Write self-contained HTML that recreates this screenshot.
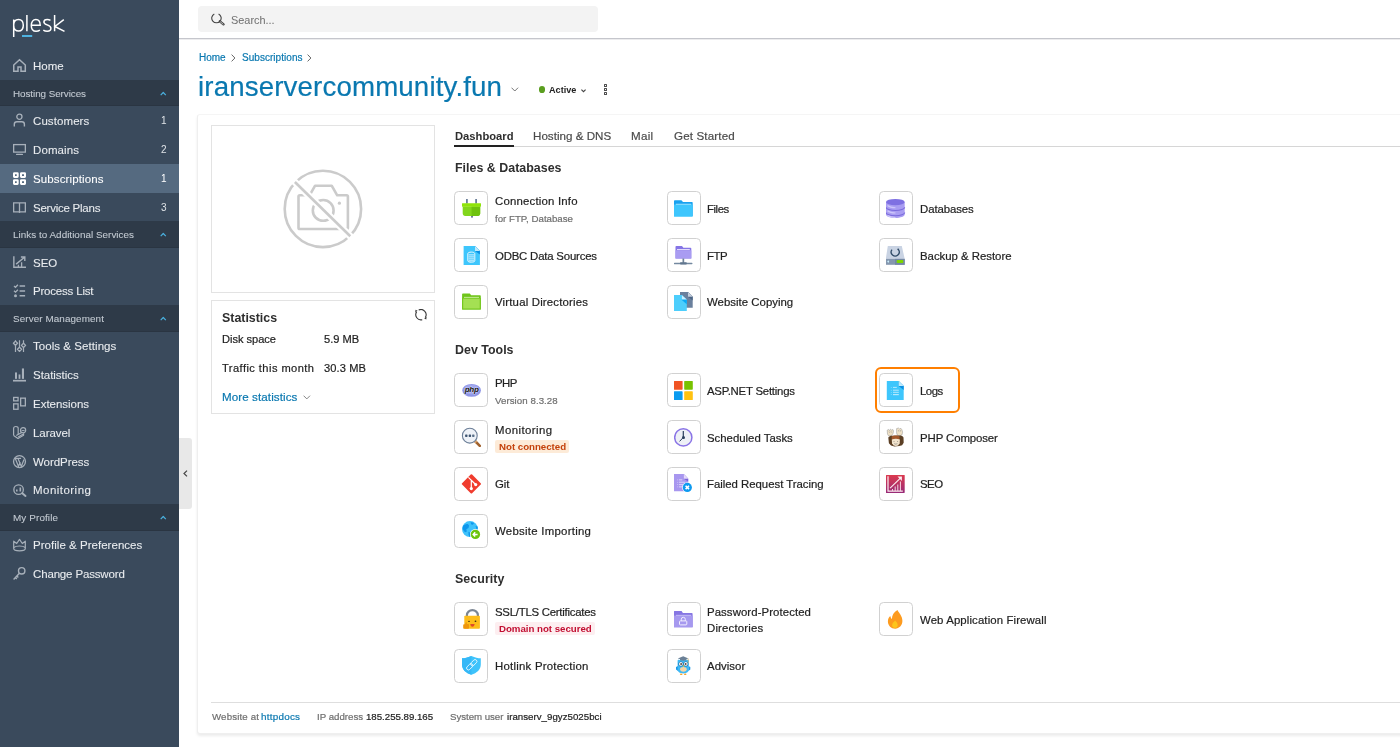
<!DOCTYPE html>
<html><head><meta charset="utf-8">
<style>
html,body{margin:0;padding:0;}
body{width:1400px;height:747px;overflow:hidden;position:relative;background:#fff;font-family:"Liberation Sans",sans-serif;}
.t{position:absolute;white-space:nowrap;line-height:1;font-family:"Liberation Sans",sans-serif;will-change:transform;-webkit-text-stroke:0.2px currentColor;}
.tile{position:absolute;width:32px;height:32px;border:1px solid #d1d1d1;border-radius:4.5px;background:#fff;}
#sidebar{position:absolute;left:0;top:0;width:178.7px;height:747px;background:#3a4a5c;}
</style></head><body>
<div id="sidebar">
<svg style="position:absolute;left:13px;top:59.10px;color:#a7b0ba" width="14" height="14" viewBox="0 0 14 14" overflow="visible"><path d="M5 12.2V7.9H8V12.2H12.3V6L6.5 0.8L0.75 6V12.2Z" fill="none" stroke="currentColor" stroke-width="1.5" stroke-linejoin="miter"/></svg>
<div style="position:absolute;left:0;top:80px;width:178.7px;height:26px;background:#2e3a48;box-shadow:inset 0 -1px 0 #2a3542"></div>
<svg style="position:absolute;left:159.6px;top:90.70px" width="7" height="5" viewBox="0 0 7 5"><path d="M0.7 4.1L3.25 1.5 5.8 4.1" fill="none" stroke="#4ab0de" stroke-width="1.2" stroke-linejoin="round"/></svg>
<svg style="position:absolute;left:13px;top:114.30px;color:#a7b0ba" width="14" height="14" viewBox="0 0 14 14" overflow="visible"><circle cx="6.4" cy="2.7" r="2.6" fill="none" stroke="currentColor" stroke-width="1.3"/><path d="M1.3 12.4V10.2c0-1.5 1-2.5 2.6-2.5h5c1.6 0 2.5 1 2.5 2.5v2.2" fill="none" stroke="currentColor" stroke-width="1.4"/></svg>
<svg style="position:absolute;left:13px;top:143.05px;color:#a7b0ba" width="14" height="14" viewBox="0 0 14 14" overflow="visible"><rect x="0.65" y="1.6" width="11.7" height="7.5" fill="none" stroke="currentColor" stroke-width="1.3"/><rect x="3" y="10.75" width="7" height="1.3" rx="0.6" fill="currentColor"/></svg>
<div style="position:absolute;left:0;top:164px;width:178.7px;height:29.00px;background:#556a80"></div>
<svg style="position:absolute;left:13px;top:171.80px;color:#ffffff" width="14" height="14" viewBox="0 0 14 14" overflow="visible"><rect x="1" y="1.2" width="3.7" height="3.7" rx="0.3" fill="none" stroke="currentColor" stroke-width="2"/><rect x="8" y="1.2" width="4" height="3.7" rx="0.3" fill="none" stroke="currentColor" stroke-width="2"/><rect x="1" y="8.2" width="3.7" height="3.7" rx="0.3" fill="none" stroke="currentColor" stroke-width="2"/><rect x="8" y="8.2" width="4" height="3.7" rx="0.3" fill="none" stroke="currentColor" stroke-width="2"/></svg>
<svg style="position:absolute;left:13px;top:200.55px;color:#a7b0ba" width="14" height="14" viewBox="0 0 14 14" overflow="visible"><path d="M0.65 1.9h5.85v9H0.65zM6.5 1.9h5.85v9H6.5z" fill="none" stroke="currentColor" stroke-width="1.3"/><path d="M6.5 10.9v1" stroke="currentColor" stroke-width="1.3"/></svg>
<div style="position:absolute;left:0;top:221px;width:178.7px;height:27px;background:#2e3a48;box-shadow:inset 0 -1px 0 #2a3542"></div>
<svg style="position:absolute;left:159.6px;top:231.70px" width="7" height="5" viewBox="0 0 7 5"><path d="M0.7 4.1L3.25 1.5 5.8 4.1" fill="none" stroke="#4ab0de" stroke-width="1.2" stroke-linejoin="round"/></svg>
<svg style="position:absolute;left:13px;top:255.80px;color:#a7b0ba" width="14" height="14" viewBox="0 0 14 14" overflow="visible"><path d="M0.85 0.2V11.3H13" fill="none" stroke="currentColor" stroke-width="1.4"/><path d="M3.1 8.1L11.8 1M7.9 1H11.8V4.9" fill="none" stroke="currentColor" stroke-width="1.4"/><path d="M5.4 8.7V11.3M8.6 6.2V11.3" stroke="currentColor" stroke-width="1.3"/></svg>
<svg style="position:absolute;left:13px;top:284.55px;color:#a7b0ba" width="14" height="14" viewBox="0 0 14 14" overflow="visible"><path d="M1 0.9l1.5 1.4 2.4-2.5M1 5.8l1.5 1.4 2.4-2.5" fill="none" stroke="currentColor" stroke-width="1.3"/><circle cx="2.5" cy="10.85" r="1.5" fill="currentColor"/><path d="M6.6 1.05h5.5M6.6 6.05h5.5M6.6 10.85h5.5" stroke="currentColor" stroke-width="1.5"/></svg>
<div style="position:absolute;left:0;top:305px;width:178.7px;height:27px;background:#2e3a48;box-shadow:inset 0 -1px 0 #2a3542"></div>
<svg style="position:absolute;left:159.6px;top:315.70px" width="7" height="5" viewBox="0 0 7 5"><path d="M0.7 4.1L3.25 1.5 5.8 4.1" fill="none" stroke="#4ab0de" stroke-width="1.2" stroke-linejoin="round"/></svg>
<svg style="position:absolute;left:13px;top:339.80px;color:#a7b0ba" width="14" height="14" viewBox="0 0 14 14" overflow="visible"><path d="M2.5 0.2v11.9M6.5 0.2v11.9M10.5 0.2v11.9" stroke="currentColor" stroke-width="1.2"/><path d="M2.5 1.1l2.1 2.1-2.1 2.1-2.1-2.1z M6.5 7.2l2.1 2.1-2.1 2.1-2.1-2.1z M10.5 3.3l2.1 2.1-2.1 2.1-2.1-2.1z" fill="#3a4a5c" stroke="currentColor" stroke-width="1.3" stroke-linejoin="round"/></svg>
<svg style="position:absolute;left:13px;top:368.55px;color:#a7b0ba" width="14" height="14" viewBox="0 0 14 14" overflow="visible"><rect x="2" y="3.45" width="2" height="6.4" fill="currentColor"/><rect x="5.6" y="5.45" width="1.8" height="4.4" fill="currentColor"/><rect x="8.9" y="-0.55" width="2.1" height="10.4" fill="currentColor"/><rect x="0" y="10.85" width="13" height="1.7" fill="currentColor"/></svg>
<svg style="position:absolute;left:13px;top:397.30px;color:#a7b0ba" width="14" height="14" viewBox="0 0 14 14" overflow="visible"><rect x="0.65" y="0.45" width="4.4" height="3.4" fill="none" stroke="currentColor" stroke-width="1.3"/><rect x="0.65" y="6.85" width="4.4" height="5.4" fill="none" stroke="currentColor" stroke-width="1.3"/><rect x="7.65" y="1.15" width="4.7" height="7.7" fill="none" stroke="currentColor" stroke-width="1.3"/></svg>
<svg style="position:absolute;left:13px;top:426.05px;color:#a7b0ba" width="14" height="14" viewBox="0 0 14 14" overflow="visible"><path d="M0.6 9.6V2.4Q0.6 0.5 2.9 0.5T5.2 2.4V8.6" fill="none" stroke="currentColor" stroke-width="1.2"/><path d="M0.6 9.6L5 12.4L10.6 9.2V7.2" fill="none" stroke="currentColor" stroke-width="1.2" stroke-linejoin="round"/><path d="M3.3 9.6L8.7 6.5M5.2 10.9L10.4 7.9" stroke="currentColor" stroke-width="1.1"/><circle cx="10.1" cy="4.15" r="2.6" fill="none" stroke="currentColor" stroke-width="1.2"/><path d="M8.6 4.6h3" stroke="currentColor" stroke-width="1"/></svg>
<svg style="position:absolute;left:13px;top:454.80px;color:#a7b0ba" width="14" height="14" viewBox="0 0 14 14" overflow="visible"><circle cx="6.5" cy="6.6" r="5.95" fill="none" stroke="currentColor" stroke-width="1.3"/><path d="M2.2 3.3l3.3 8.2 1.7-4.5M4.9 3.3l3.4 8.2 2.7-7M1.6 3.3h4.4M4.2 3.3h3.9" fill="none" stroke="currentColor" stroke-width="1.2"/></svg>
<svg style="position:absolute;left:13px;top:483.55px;color:#a7b0ba" width="14" height="14" viewBox="0 0 14 14" overflow="visible"><circle cx="5.6" cy="5.65" r="4.75" fill="none" stroke="currentColor" stroke-width="1.3"/><path d="M9.3 9.2l3.2 2.7" stroke="currentColor" stroke-width="2" stroke-linecap="round"/><rect x="3" y="5.5" width="1.6" height="2" fill="currentColor"/><rect x="6.5" y="3.5" width="1.6" height="4" fill="currentColor"/></svg>
<div style="position:absolute;left:0;top:504px;width:178.7px;height:27px;background:#2e3a48;box-shadow:inset 0 -1px 0 #2a3542"></div>
<svg style="position:absolute;left:159.6px;top:514.70px" width="7" height="5" viewBox="0 0 7 5"><path d="M0.7 4.1L3.25 1.5 5.8 4.1" fill="none" stroke="#4ab0de" stroke-width="1.2" stroke-linejoin="round"/></svg>
<svg style="position:absolute;left:13px;top:538.80px;color:#a7b0ba" width="14" height="14" viewBox="0 0 14 14" overflow="visible"><path d="M0.7 2.2L3.7 4.5 6.5 0.4 9.3 4.5 12.3 2.2V9.5C12.3 11 9.5 11.8 6.5 11.8S0.7 11 0.7 9.5Z" fill="none" stroke="currentColor" stroke-width="1.2" stroke-linejoin="round"/><path d="M0.7 8.4C2 7.5 4 7 6.5 7S11 7.5 12.3 8.4" fill="none" stroke="currentColor" stroke-width="1.2"/></svg>
<svg style="position:absolute;left:13px;top:567.55px;color:#a7b0ba" width="14" height="14" viewBox="0 0 14 14" overflow="visible"><circle cx="8.7" cy="2.85" r="3.2" fill="none" stroke="currentColor" stroke-width="1.4"/><path d="M6.4 5.2L0.6 11.4M2.3 9.6l1.5 1.5M3.9 8l1.4 1.4" fill="none" stroke="currentColor" stroke-width="1.4"/></svg>
</div>
<!-- top header -->
<div style="position:absolute;left:178.7px;top:38px;width:1222px;height:1px;background:#c5c6cc"></div>
<div style="position:absolute;left:178.7px;top:39px;width:1222px;height:1px;background:#ececee"></div>
<div style="position:absolute;left:198px;top:6px;width:400px;height:26px;background:#f3f3f3;border-radius:4px"></div>
<svg style="position:absolute;left:210.5px;top:12.5px" width="14" height="13" viewBox="0 0 14 13"><path d="M3.3 0.9A4.7 4.7 0 1 0 7.6 0.9" fill="none" stroke="#444" stroke-width="1.1"/><path d="M8.9 8.3l3.6 3" stroke="#444" stroke-width="2.4" stroke-linecap="round"/><path d="M9.4 8.9l2.6 2.2" stroke="#f3f3f3" stroke-width="0.7" stroke-linecap="round"/></svg>
<!-- breadcrumbs chevrons -->
<svg style="position:absolute;left:231px;top:53.5px" width="5" height="8" viewBox="0 0 5 8"><path d="M0.6 0.6l3.3 3.4-3.3 3.4" fill="none" stroke="#666" stroke-width="1"/></svg>
<svg style="position:absolute;left:307px;top:53.5px" width="5" height="8" viewBox="0 0 5 8"><path d="M0.6 0.6l3.3 3.4-3.3 3.4" fill="none" stroke="#666" stroke-width="1"/></svg>
<!-- title chevron -->
<svg style="position:absolute;left:511px;top:87px" width="8" height="5" viewBox="0 0 8 5"><path d="M0.5 0.7l3.3 3.3 3.3-3.3" fill="none" stroke="#666" stroke-width="0.9"/></svg>
<div style="position:absolute;left:538.8px;top:86px;width:6.6px;height:6.8px;border-radius:50%;background:#5a9e1f"></div>
<svg style="position:absolute;left:580.8px;top:88.5px" width="5" height="4" viewBox="0 0 5 4"><path d="M0.4 0.6l2.1 2.1 2.1-2.1" fill="none" stroke="#444" stroke-width="1.1"/></svg>
<div style="position:absolute;left:604px;top:84px;width:1px;height:1px;border:1px solid #4d4d4d;border-radius:0.6px"></div>
<div style="position:absolute;left:604px;top:88px;width:1px;height:1px;border:1px solid #4d4d4d;border-radius:0.6px"></div>
<div style="position:absolute;left:604px;top:92px;width:1px;height:1px;border:1px solid #4d4d4d;border-radius:0.6px"></div>
<!-- sidebar collapse handle -->
<div style="position:absolute;left:179px;top:437.7px;width:12.8px;height:71px;background:#e8e8e8;border-radius:0 3px 3px 0"></div>
<svg style="position:absolute;left:182.5px;top:469.5px" width="5" height="7" viewBox="0 0 5 7"><path d="M4 0.6L1 3.5 4 6.4" fill="none" stroke="#444" stroke-width="1.2"/></svg>
<!-- card -->
<div style="position:absolute;left:197px;top:114px;width:1260px;height:618px;border:1px solid #efefef;border-top-color:#f5f5f5;border-radius:3px;box-shadow:0 2px 3px rgba(0,0,0,0.08);background:#fff"></div>
<div style="position:absolute;left:211px;top:125px;width:222px;height:166px;border:1px solid #e3e3e3"></div>
<svg style="position:absolute;left:278px;top:164px" width="90" height="90" viewBox="0 0 90 90">
<g fill="none" stroke="#cbcbcb" stroke-width="2.6">
<circle cx="44.9" cy="44.9" r="38.2"/>
<path d="M20.5 33v30.7q0 1.3 1.3 1.3h46.8q1.3 0 1.3-1.3V32.6q0-1.3-1.3-1.3h-9.4l-5.5-9.6h-16.6l-5.5 9.6h-9.8q-1.3 0-1.3 1.3z" stroke-linejoin="round"/>
<circle cx="45.2" cy="46.4" r="10.4"/>
</g>
<circle cx="61.4" cy="39.2" r="1.6" fill="#cbcbcb"/>
<path d="M14.5 15.8L74.5 74.6" stroke="#fff" stroke-width="7"/>
<path d="M16.9 18L72.3 72.3" stroke="#cbcbcb" stroke-width="2.6"/>
</svg>
<div style="position:absolute;left:211px;top:300px;width:222px;height:112px;border:1px solid #e3e3e3"></div>
<svg style="position:absolute;left:413.5px;top:308.5px" width="14" height="13" viewBox="0 0 14 13"><path d="M4.7 0.99A5.2 5.2 0 0 1 11.2 8.6M8.25 10.72A5.2 5.2 0 0 1 2.6 2.9" fill="none" stroke="#3a3a3a" stroke-width="1.1"/><path d="M10.2 9.6L12.6 7.8 12.3 10.6z M3.6 1.8L1.2 3.6 1.5 0.8z" fill="#3a3a3a"/></svg>
<svg style="position:absolute;left:302.5px;top:394.5px" width="8" height="5" viewBox="0 0 8 5"><path d="M0.6 0.7l3.2 3.2 3.2-3.2" fill="none" stroke="#777" stroke-width="0.9"/></svg>
<!-- tabs -->
<div style="position:absolute;left:454px;top:146px;width:946px;height:1px;background:#d6d6d6"></div>
<div style="position:absolute;left:454px;top:145px;width:60px;height:2px;background:#222"></div>
<!-- logs highlight -->
<div style="position:absolute;left:875px;top:367.1px;width:81px;height:42px;border:2px solid #ff7f00;border-radius:6px"></div>
<div class="tile" style="left:454px;top:191px"></div>
<svg style="position:absolute;left:461.00px;top:198.00px" width="20" height="20" viewBox="0 0 20 20">
<rect x="5" y="1" width="1.8" height="4.6" fill="#6b7f99"/>
<rect x="14.2" y="1" width="1.8" height="4.6" fill="#6b7f99"/>
<rect x="10" y="17" width="2" height="2.6" fill="#6b7f99"/>
<path d="M1.7 8.6h17.5v6.6c0 1.6-1 2.7-2.6 2.7H4.3c-1.6 0-2.6-1.1-2.6-2.7z" fill="#82d61c"/>
<path d="M10.6 8.6h8.6v6.6c0 1.6-1 2.7-2.6 2.7h-6z" fill="#6fc20e"/>
<rect x="1" y="5.2" width="19" height="3.5" rx="0.4" fill="#8fe40a"/>
</svg>
<div class="tile" style="left:667px;top:191px"></div>
<svg style="position:absolute;left:674.20px;top:198.00px" width="20" height="20" viewBox="0 0 20 20">
<path d="M0 3c0-0.5 0.3-0.8 0.8-0.8h6.6l1.6 1.9h9c0.5 0 0.7 0.3 0.7 0.7v13.2H0z" fill="#18a2f0"/>
<rect x="1.8" y="5.8" width="15.4" height="1.2" fill="#c5efff"/>
<rect x="0" y="6.6" width="18.7" height="12.2" rx="0.5" fill="#3ec6fd"/>
</svg>
<div class="tile" style="left:879px;top:191px"></div>
<svg style="position:absolute;left:886.20px;top:198.00px" width="20" height="20" viewBox="0 0 20 20">
<path d="M0 4v12.5c0 1.8 4.2 3.5 9.35 3.5s9.35-1.7 9.35-3.5V4z" fill="#a99df2"/>
<path d="M0 9.2c0 1.8 4.2 3.3 9.35 3.3s9.35-1.5 9.35-3.3" fill="none" stroke="#7a6bdc" stroke-width="1.1"/>
<path d="M0 14.4c0 1.8 4.2 3.3 9.35 3.3s9.35-1.5 9.35-3.3" fill="none" stroke="#7a6bdc" stroke-width="1.1"/>
<path d="M1.5 7.5c2 1.6 5 2.2 8 2.3M1.5 12.7c2 1.6 5 2.2 8 2.3M1.5 17.5c2 1.4 5 1.9 8 2" fill="none" stroke="#cdc6fa" stroke-width="1.1"/>
<ellipse cx="9.35" cy="4.1" rx="9.35" ry="3.2" fill="#7e70e2"/>
</svg>
<div class="tile" style="left:454px;top:238px"></div>
<svg style="position:absolute;left:461.00px;top:245.00px" width="20" height="20" viewBox="0 0 20 20">
<path d="M2.6 1h11.4l4.9 4.9V20H2.6z" fill="#3ec6fc"/>
<path d="M14 1l4.9 4.9v3.6L14 5.9z" fill="#0a8fe2"/>
<path d="M14 1v4.9h4.9z" fill="#bfeafd"/>
<path d="M6.8 8.6c0-0.9 1.6-1.5 3.5-1.5s3.5 0.6 3.5 1.5v7.2c0 0.9-1.6 1.4-3.5 1.4s-3.5-0.5-3.5-1.4z" fill="none" stroke="#e9f8ff" stroke-width="1"/>
<path d="M7.6 9.9h5.4M7.6 11.9h5.4M7.6 13.9h5.4M7.6 15.8h5.4" stroke="#e9f8ff" stroke-width="0.9"/>
</svg>
<div class="tile" style="left:667px;top:238px"></div>
<svg style="position:absolute;left:674.20px;top:245.00px" width="20" height="20" viewBox="0 0 20 20">
<path d="M1.5 1.8c0-0.5 0.3-0.8 0.8-0.8h5.7l1.4 1.8h7.1c0.5 0 0.8 0.3 0.8 0.8v10H1.5z" fill="#8675e6"/>
<rect x="3" y="4.1" width="12.8" height="1.1" fill="#ebe7fd"/>
<rect x="1.5" y="5.2" width="15.8" height="8.3" rx="0.5" fill="#a99cf2"/>
<rect x="8.5" y="13.5" width="1.7" height="4.5" fill="#6f8399"/>
<rect x="-0.1" y="17.7" width="18.6" height="1.5" rx="0.7" fill="#7489a0"/>
<rect x="6" y="17.3" width="6.8" height="2.2" rx="0.8" fill="#61778f"/>
</svg>
<div class="tile" style="left:879px;top:238px"></div>
<svg style="position:absolute;left:886.20px;top:245.00px" width="20" height="20" viewBox="0 0 20 20">
<path d="M1.8 1h14l2.9 12.9H-0.2z" fill="#c9d3e3"/>
<rect x="-0.2" y="13.9" width="18.9" height="5.9" fill="#8597af"/>
<rect x="9" y="13.9" width="9.7" height="5.9" fill="#7488a3"/>
<rect x="10.7" y="15.1" width="6.6" height="3" rx="0.8" fill="#7ed600"/>
<path d="M2.2 15.3l1 1.3-1 1.3-1-1.3z" fill="#cdf2ff"/>
<path d="M6 4.6a4 4 0 1 0 6.4 0" fill="none" stroke="#2f4a66" stroke-width="1.3"/>
<circle cx="12.2" cy="4.3" r="0.9" fill="#2f4a66"/>
</svg>
<div class="tile" style="left:454px;top:285px"></div>
<svg style="position:absolute;left:461.00px;top:292.00px" width="20" height="20" viewBox="0 0 20 20">
<path d="M1.1 2.2c0-0.5 0.3-0.8 0.8-0.8h6.9l1.4 1.9h8.8c0.5 0 0.8 0.3 0.8 0.8v13.4H1.1z" fill="#6fc51a"/>
<rect x="3" y="4.9" width="15" height="1" fill="#ddf6bf"/>
<rect x="1.1" y="5.8" width="18.7" height="11.7" rx="0.5" fill="#75c71e"/>
<rect x="2.2" y="6.7" width="16.5" height="9.8" fill="#a4e053"/>
</svg>
<div class="tile" style="left:667px;top:285px"></div>
<svg style="position:absolute;left:674.20px;top:292.00px" width="20" height="20" viewBox="0 0 20 20">
<path d="M6 0.1h8l4.7 4.7v11H6z" fill="#6a809d"/>
<path d="M14 0.1l4.7 4.7v3.8L14 4.8z" fill="#4b6485"/>
<path d="M14 0.1v4.7h4.7z" fill="#c6cfdd"/>
<path d="M-0.2 2.9h8l5 5v11H-0.2z" fill="#4dcefc"/>
<path d="M7.8 2.9l5 5v4.4l-5-4.4z" fill="#0aa8f5"/>
<path d="M7.8 2.9v4.5h5z" fill="#c9f0ff"/>
</svg>
<div class="tile" style="left:454px;top:373px"></div>
<svg style="position:absolute;left:461.00px;top:380.10px" width="20" height="20" viewBox="0 0 20 20">
<ellipse cx="10.6" cy="10.4" rx="9.3" ry="6.4" fill="#8e95e6"/>
<ellipse cx="10.6" cy="9.6" rx="8" ry="4.8" fill="#a0a6ee"/>
<text x="10.6" y="12.0" text-anchor="middle" font-family="Liberation Sans" font-weight="700" font-style="italic" font-size="8" fill="#111" stroke="#fff" stroke-width="0.5" paint-order="stroke" letter-spacing="-0.3">php</text>
</svg>
<div class="tile" style="left:667px;top:373px"></div>
<svg style="position:absolute;left:674.20px;top:380.10px" width="20" height="20" viewBox="0 0 20 20">
<rect x="-0.1" y="1" width="8.7" height="8.7" rx="0.6" fill="#f05424"/>
<rect x="10.2" y="1" width="8.6" height="8.7" rx="0.6" fill="#78c200"/>
<rect x="-0.1" y="11.3" width="8.7" height="8.7" rx="0.6" fill="#0a9bf0"/>
<rect x="10.2" y="11.3" width="8.6" height="8.7" rx="0.6" fill="#ffc211"/>
</svg>
<div class="tile" style="left:879px;top:373px"></div>
<svg style="position:absolute;left:886.20px;top:380.10px" width="20" height="20" viewBox="0 0 20 20">
<path d="M0.8 1h11.8l5.1 5.1V20H0.8z" fill="#3ec6fc"/>
<path d="M12.6 1l5.1 5.1v3.8L12.6 6.1z" fill="#0a8fe2"/>
<path d="M12.6 1v5.1h5.1z" fill="#bfeafd"/>
<g fill="#b5e8fd"><rect x="4.9" y="7.1" width="0.7" height="0.7"/><rect x="4.9" y="9.9" width="0.7" height="0.7"/><rect x="4.9" y="12" width="0.7" height="0.7"/><rect x="4.9" y="14.2" width="0.7" height="0.7"/>
<rect x="7" y="6.9" width="3.8" height="1"/><rect x="7" y="9.7" width="5.8" height="1"/><rect x="7" y="11.8" width="5.8" height="1"/><rect x="7" y="14" width="5.8" height="1.2"/></g>
</svg>
<div class="tile" style="left:454px;top:420px"></div>
<svg style="position:absolute;left:461.00px;top:427.10px" width="20" height="20" viewBox="0 0 20 20">
<path d="M14 14l4.8 4.8" stroke="#a0622e" stroke-width="2.6" stroke-linecap="round"/>
<path d="M13.8 13.8l1.6 1.6" stroke="#d9a46e" stroke-width="2.4"/>
<circle cx="8.8" cy="8.7" r="7.4" fill="#eef2f8" stroke="#6c7f98" stroke-width="1.1"/>
<rect x="4.1" y="7.5" width="2.4" height="2.4" rx="0.6" fill="#3f5672"/>
<rect x="7.7" y="7.5" width="2.4" height="2.4" rx="0.6" fill="#3f5672"/>
<rect x="11.1" y="7.5" width="2.4" height="2.4" rx="0.6" fill="#5a7089"/>
</svg>
<div style="position:absolute;left:495.00px;top:440.20px;width:74px;height:12.6px;background:#fdebd8;border-radius:2px"></div>
<div class="tile" style="left:667px;top:420px"></div>
<svg style="position:absolute;left:674.20px;top:427.10px" width="20" height="20" viewBox="0 0 20 20">
<circle cx="9.3" cy="10.4" r="8.6" fill="#eef1f6" stroke="#8a74e6" stroke-width="1.5"/>
<path d="M9.3 10.6V4" stroke="#2a3f5c" stroke-width="1.2"/>
<path d="M9.3 10.4L5.6 14.4" stroke="#2a3f5c" stroke-width="1"/>
<circle cx="9.5" cy="10.4" r="1.5" fill="#2a3f5c"/>
</svg>
<div class="tile" style="left:879px;top:420px"></div>
<svg style="position:absolute;left:886.20px;top:427.10px" width="20" height="20" viewBox="0 0 20 20">
<path d="M1.2 3.2l1.4-0.8 0.9 1.3 1-1.6 1.1 1 1.3-0.6 0.6 1.5-0.5 2.5-1.5 2.2-2.8 0.3-1.2-1.8z" fill="#efe1c6" stroke="#9a9a9a" stroke-width="0.55"/>
<path d="M10.6 1.6l1.8-0.6 1 0.9 1.6-0.5 0.9 1.4 0.7 2.3-0.5 2.6-2.2 1.2-2.5-0.6-0.8-2.4z" fill="#efe1c6" stroke="#9a9a9a" stroke-width="0.55"/>
<path d="M3 4.5l0.6 1.2M5 4.2l0.3 1.5M12.5 3l0.4 1.6M14.3 3l0.2 1.5" stroke="#8a8a8a" stroke-width="0.5"/>
<path d="M2.3 10.5c0.8-1.3 2.2-1.8 3.6-1.8l7.8-0.1c1.6 0 3.2 0.6 3.8 1.9l0.2 5.2-1.6 2.5-2.8 0.9-4.9 0.3-3.4-0.8-2.1-2.4z" fill="#5b3f24"/>
<path d="M5.6 9.4c1.2-0.8 2.6-1 4.1-1s2.9 0.3 3.9 1l-0.3 3.4-7.4 0.1z" fill="#a3582b"/>
<path d="M5.8 12.6c1.2-0.6 2.6-0.8 4-0.8s2.9 0.2 4.1 0.8l-0.2 3.6-1.6 2.3-2.3 0.4-2.3-0.5-1.5-2.2z" fill="#f2e4cd"/>
<path d="M8.2 16.6l1.6 0.6 1.6-0.6" stroke="#777" stroke-width="0.6" fill="none"/>
<ellipse cx="8" cy="14.3" rx="0.5" ry="0.4" fill="#555"/><ellipse cx="11.6" cy="14.3" rx="0.5" ry="0.4" fill="#555"/>
</svg>
<div class="tile" style="left:454px;top:467px"></div>
<svg style="position:absolute;left:461.00px;top:474.10px" width="20" height="20" viewBox="0 0 20 20">
<path d="M9.7 0.6q0.7-0.7 1.4 0l8.6 8.6q0.7 0.7 0 1.4l-8.6 8.6q-0.7 0.7-1.4 0L1.1 10.6q-0.7-0.7 0-1.4z" fill="#f03c2e"/>
<path d="M7.4 3.3l3 3M10.3 6.3v8.2M10.3 6.3l4.3 4.2" stroke="#fff" stroke-width="1.2" fill="none"/>
<circle cx="10.3" cy="14.6" r="1.6" fill="#fff"/>
<circle cx="14.7" cy="10.6" r="1.6" fill="#fff"/>
</svg>
<div class="tile" style="left:667px;top:467px"></div>
<svg style="position:absolute;left:674.20px;top:474.10px" width="20" height="20" viewBox="0 0 20 20">
<path d="M0 0.1h9.7l4.5 4.7v12.4H0z" fill="#a897ef"/>
<path d="M9.7 0.1l4.5 4.7v2.7L9.7 4.8z" fill="#7a63d9"/>
<path d="M9.7 0.1v4.7h4.5z" fill="#e6dafb"/>
<g fill="#d6cdf8"><rect x="3" y="5.5" width="0.8" height="0.8"/><rect x="3" y="7.9" width="0.8" height="0.8"/><rect x="3" y="10.2" width="0.8" height="0.8"/><rect x="3" y="12.5" width="0.8" height="0.8"/>
<rect x="4.9" y="5.3" width="3.4" height="1.1"/><rect x="4.9" y="7.7" width="6" height="1.1"/><rect x="4.9" y="10" width="5" height="1.1"/><rect x="4.9" y="12.3" width="4" height="1.1"/></g>
<circle cx="13.3" cy="13.4" r="5.2" fill="#fff"/>
<circle cx="13.3" cy="13.4" r="4.6" fill="#0d9af0"/>
<path d="M11.6 11.7l3.4 3.4M15 11.7l-3.4 3.4" stroke="#fff" stroke-width="1.6"/>
</svg>
<div class="tile" style="left:879px;top:467px"></div>
<svg style="position:absolute;left:886.20px;top:474.10px" width="20" height="20" viewBox="0 0 20 20">
<defs><linearGradient id="seog" x1="0" y1="0" x2="0" y2="1"><stop offset="0" stop-color="#dc3a4e"/><stop offset="1" stop-color="#982a78"/></linearGradient></defs>
<rect x="-0.1" y="1" width="18.8" height="17.9" rx="0.6" fill="url(#seog)"/>
<path d="M2 2.3v14.9h14.8" stroke="#fdeef2" stroke-width="1.2" fill="none"/>
<path d="M4.1 14.2L15.2 3.3" stroke="#fdeef2" stroke-width="1.1"/>
<path d="M11.5 2.6h4.4v4.4z" fill="#fdeef2"/>
<path d="M6.5 15v2M9.2 12.5v4.5M11.8 10.5v6.5M14.4 7.5v9.5" stroke="#f5d7e2" stroke-width="1"/>
</svg>
<div class="tile" style="left:454px;top:514px"></div>
<svg style="position:absolute;left:461.00px;top:521.10px" width="20" height="20" viewBox="0 0 20 20">
<circle cx="9" cy="8.1" r="8" fill="#3ec2fb"/>
<path d="M2.3 4.5c1.5-1.2 3-1.7 4.5-1.4l1.3 1.5-0.6 2.3-2.2 1.4 0.6 2.2-1.8 0.8C2.8 10.2 1.8 8.5 1.6 6.8z" fill="#0e97ec"/>
<path d="M9.6 1.2c1.5 0 2.7 0.4 3.4 1l-1.2 1.5-1.5-0.2z" fill="#0e97ec"/>
<path d="M7.4 10.8l2.2 1 0.5 3-1.5 1.3-1-2.2z" fill="#0e97ec"/>
<path d="M14.5 5l2 0.6 0.4 2-1.5 0.3z" fill="#0e97ec"/>
<circle cx="14.4" cy="13.4" r="5.4" fill="#fff"/>
<circle cx="14.4" cy="13.4" r="4.7" fill="#6cc40e"/>
<path d="M16.6 13.4h-4.2M14.2 11.3l-2 2.1 2 2.1" stroke="#fff" stroke-width="1.5" fill="none"/>
</svg>
<div class="tile" style="left:454px;top:602px"></div>
<svg style="position:absolute;left:461.00px;top:609.10px" width="20" height="20" viewBox="0 0 20 20">
<path d="M5.9 7V6.2a5.5 5.1 0 0 1 11 0V7" fill="none" stroke="#7b8693" stroke-width="2.2"/>
<rect x="3.3" y="6.8" width="15.6" height="12.9" rx="0.8" fill="#fdbd1a"/>
<ellipse cx="8" cy="12.3" rx="0.9" ry="0.6" fill="#3a2a10"/>
<ellipse cx="14.5" cy="12.3" rx="0.9" ry="0.7" fill="#3a2a10"/>
<path d="M9.3 15.1h4.3c0 1.6-1 2.7-2.15 2.7s-2.15-1.1-2.15-2.7z" fill="#df4a2a"/>
<path d="M5.2 13.2c0.6 0 0.8 0.6 0.7 1.9h1.3c0.6 0 0.8 0.5 0.8 1.2v2.4c0 0.6-0.3 1-0.9 1H3.2c-0.6 0-1-0.4-1-1v-2.4c0-0.6 0.4-1.1 1-1.1h1.1c0-1 0.2-2 0.9-2z" fill="#ee960c"/>
</svg>
<div style="position:absolute;left:495.00px;top:622.20px;width:100px;height:12.6px;background:#fdeef0;border-radius:2px"></div>
<div class="tile" style="left:667px;top:602px"></div>
<svg style="position:absolute;left:674.20px;top:609.10px" width="20" height="20" viewBox="0 0 20 20">
<path d="M-0.1 2.9c0-0.5 0.3-0.8 0.8-0.8h6.9l1.3 1.9h8.9c0.5 0 0.8 0.3 0.8 0.8v13.5H-0.1z" fill="#8676e3"/>
<rect x="2" y="5.9" width="15" height="0.9" fill="#e6e2fc"/>
<rect x="-0.1" y="6.6" width="18.8" height="11.7" rx="0.5" fill="#a699ef"/>
<path d="M7.3 11.9v-1.6a2 2 0 0 1 4 0v1.6" fill="none" stroke="#f1eefe" stroke-width="1"/>
<rect x="5.5" y="11.9" width="7.3" height="4" rx="0.8" fill="none" stroke="#f1eefe" stroke-width="1"/>
</svg>
<div class="tile" style="left:879px;top:602px"></div>
<svg style="position:absolute;left:886.20px;top:609.10px" width="20" height="20" viewBox="0 0 20 20">
<path d="M11.4 0.9c1.6 3.2 5 5.8 5 11.2 0 4.4-3.2 7.6-7.2 7.6S1.9 16.6 1.9 12.5c0-2.6 0.9-4.3 2.4-5.5 0.3 1.5 0.8 2.4 1.6 2.9 0.1-4 2-7.1 5.5-9z" fill="#fd9b1f"/>
<path d="M9.2 11.6c1 1.3 2.5 2.4 2.5 4.6 0 1.7-1.1 2.8-2.6 2.8s-3-1.1-3-2.8c0-2.2 1.9-3 3.1-4.6z" fill="#fdc51c"/>
</svg>
<div class="tile" style="left:454px;top:649px"></div>
<svg style="position:absolute;left:461.00px;top:656.10px" width="20" height="20" viewBox="0 0 20 20">
<path d="M1 2.3c3 0 5.5-0.6 9.4-2.3 3.9 1.7 6.4 2.3 9.4 2.3v6c0 5.4-4 8.8-9.4 10.5C5 17.1 1 13.7 1 8.3z" fill="#3ec3fb"/>
<path d="M1 2.3c3 0 5.5-0.6 9.4-2.3v18.8C5 17.1 1 13.7 1 8.3z" fill="#35b8f7"/>
<g transform="rotate(-45 10.75 8.75)" fill="none" stroke="#e8f8ff" stroke-width="0.9"><rect x="4.2" y="6.9" width="7.3" height="3.7" rx="1.85"/><rect x="10" y="6.9" width="7.3" height="3.7" rx="1.85"/></g>
</svg>
<div class="tile" style="left:667px;top:649px"></div>
<svg style="position:absolute;left:674.20px;top:656.10px" width="20" height="20" viewBox="0 0 20 20">
<path d="M2 11l2-1v5l-2-1.5z" fill="#1a98e8"/>
<path d="M16.3 11l-2-1v5l2-1.5z" fill="#1a98e8"/>
<path d="M3.6 5c0-1.2 0.8-1.5 1.5-1.1 1.3-0.4 2.6-0.5 4.1-0.5s2.8 0.1 4.1 0.5c0.7-0.4 1.5-0.1 1.5 1.1v8.5c0 2.5-2.5 3.9-5.6 3.9s-5.6-1.4-5.6-3.9z" fill="#3cb9f6"/>
<circle cx="6.9" cy="7.9" r="2.5" fill="#1a6fa8"/><circle cx="11.8" cy="7.9" r="2.5" fill="#1a6fa8"/>
<circle cx="6.9" cy="7.9" r="1.9" fill="#fff"/><circle cx="11.8" cy="7.9" r="1.9" fill="#fff"/>
<circle cx="7.1" cy="8" r="1" fill="#5a4a44"/><circle cx="11.6" cy="8" r="1" fill="#5a4a44"/>
<path d="M8.7 9.6h1.6l-0.8 1.8z" fill="#f5c518"/>
<ellipse cx="9.4" cy="13.3" rx="3.3" ry="2.4" fill="#f3d5a8"/>
<ellipse cx="7.2" cy="18.3" rx="1.3" ry="0.8" fill="#f5a01e"/><ellipse cx="11.2" cy="18.3" rx="1.3" ry="0.8" fill="#f5a01e"/>
<path d="M3.8 2.4L9.2 0.2l5.2 2.2-5.2 1.7z" fill="#6b8096"/>
<path d="M6 3v1.2c2 0.6 4.4 0.6 6.4 0V3" fill="#6b8096"/>
<path d="M14.2 2.5v4.5" stroke="#d6a84a" stroke-width="0.6"/>
</svg>
<!-- footer line -->
<div style="position:absolute;left:211px;top:702px;width:1190px;height:1px;background:#dedede"></div>
<!-- logo -->
<svg style="position:absolute;left:0;top:0" width="80" height="45" viewBox="0 0 80 45">
<g fill="none" stroke="#fff" stroke-width="1.5">
<path d="M13.7 37V19.5M13.7 25c0-4 2.2-5.6 4.8-5.6 3 0 4.8 2.4 4.8 5.8s-1.8 5.8-4.8 5.8c-2.6 0-4.8-1.6-4.8-5.6"/>
<path d="M26.9 15v16.3"/>
<path d="M31.6 25.3h8.6c0-3.6-1.6-5.8-4.3-5.8-2.8 0-4.6 2.4-4.6 5.9s1.9 5.9 4.8 5.9c1.5 0 2.8-0.5 3.8-1.2"/>
<path d="M50.5 20.4c-0.9-0.6-2.1-1-3.3-1-2 0-3.3 1-3.3 2.6 0 3.6 7 2.2 7 6.3 0 1.9-1.6 3-3.7 3-1.5 0-2.9-0.5-3.9-1.2"/>
<path d="M54.6 15v16.3M63.8 19.6l-8.9 6.9 9.6 4.9"/>
</g>
<rect x="22" y="35" width="10.2" height="2" fill="#4fb3e0"/>
</svg>
<div class="t" style="left:32.5px;top:61.00px;font-size:11.5px;color:#e9ecef;font-weight:400;-webkit-text-stroke:0.08px currentColor;letter-spacing:0.004px;">Home</div>
<div class="t" style="left:12.9px;top:89.00px;font-size:9.9px;color:#c2c9d1;font-weight:400;-webkit-text-stroke:0.1px currentColor;letter-spacing:-0.073px;">Hosting Services</div>
<div class="t" style="left:32.5px;top:116.00px;font-size:11.5px;color:#e9ecef;font-weight:400;-webkit-text-stroke:0.08px currentColor;letter-spacing:0.086px;">Customers</div>
<div class="t" style="right:1233.2px;top:116.20px;font-size:10px;color:#dfe3e7;font-weight:400;-webkit-text-stroke:0;">1</div>
<div class="t" style="left:32.5px;top:145.00px;font-size:11.5px;color:#e9ecef;font-weight:400;-webkit-text-stroke:0.08px currentColor;letter-spacing:0.102px;">Domains</div>
<div class="t" style="right:1233.2px;top:145.20px;font-size:10px;color:#dfe3e7;font-weight:400;-webkit-text-stroke:0;">2</div>
<div class="t" style="left:32.5px;top:174.00px;font-size:11.5px;color:#ffffff;font-weight:400;-webkit-text-stroke:0.08px currentColor;letter-spacing:0.121px;">Subscriptions</div>
<div class="t" style="right:1233.2px;top:174.20px;font-size:10px;color:#ffffff;font-weight:400;-webkit-text-stroke:0;">1</div>
<div class="t" style="left:32.5px;top:203.00px;font-size:11.5px;color:#e9ecef;font-weight:400;-webkit-text-stroke:0.08px currentColor;letter-spacing:-0.243px;">Service Plans</div>
<div class="t" style="right:1233.2px;top:203.20px;font-size:10px;color:#dfe3e7;font-weight:400;-webkit-text-stroke:0;">3</div>
<div class="t" style="left:12.9px;top:230.00px;font-size:9.9px;color:#c2c9d1;font-weight:400;-webkit-text-stroke:0.1px currentColor;letter-spacing:0.029px;">Links to Additional Services</div>
<div class="t" style="left:32.5px;top:258.00px;font-size:11.5px;color:#e9ecef;font-weight:400;-webkit-text-stroke:0.08px currentColor;">SEO</div>
<div class="t" style="left:32.5px;top:286.00px;font-size:11.5px;color:#e9ecef;font-weight:400;-webkit-text-stroke:0.08px currentColor;letter-spacing:-0.195px;">Process List</div>
<div class="t" style="left:12.9px;top:314.00px;font-size:9.9px;color:#c2c9d1;font-weight:400;-webkit-text-stroke:0.1px currentColor;letter-spacing:0.089px;">Server Management</div>
<div class="t" style="left:32.5px;top:341.00px;font-size:11.5px;color:#e9ecef;font-weight:400;-webkit-text-stroke:0.08px currentColor;letter-spacing:0.055px;">Tools &amp; Settings</div>
<div class="t" style="left:32.5px;top:370.00px;font-size:11.5px;color:#e9ecef;font-weight:400;-webkit-text-stroke:0.08px currentColor;letter-spacing:-0.035px;">Statistics</div>
<div class="t" style="left:32.5px;top:399.00px;font-size:11.5px;color:#e9ecef;font-weight:400;-webkit-text-stroke:0.08px currentColor;letter-spacing:-0.018px;">Extensions</div>
<div class="t" style="left:32.5px;top:428.00px;font-size:11.5px;color:#e9ecef;font-weight:400;-webkit-text-stroke:0.08px currentColor;letter-spacing:-0.070px;">Laravel</div>
<div class="t" style="left:32.5px;top:457.00px;font-size:11.5px;color:#e9ecef;font-weight:400;-webkit-text-stroke:0.08px currentColor;letter-spacing:-0.046px;">WordPress</div>
<div class="t" style="left:32.5px;top:485.00px;font-size:11.5px;color:#e9ecef;font-weight:400;-webkit-text-stroke:0.08px currentColor;letter-spacing:0.466px;">Monitoring</div>
<div class="t" style="left:12.9px;top:513.00px;font-size:9.9px;color:#c2c9d1;font-weight:400;-webkit-text-stroke:0.1px currentColor;letter-spacing:0.122px;">My Profile</div>
<div class="t" style="left:32.5px;top:540.00px;font-size:11.5px;color:#e9ecef;font-weight:400;-webkit-text-stroke:0.08px currentColor;letter-spacing:0.031px;">Profile &amp; Preferences</div>
<div class="t" style="left:32.5px;top:569.00px;font-size:11.5px;color:#e9ecef;font-weight:400;-webkit-text-stroke:0.08px currentColor;letter-spacing:-0.156px;">Change Password</div>
<div class="t" style="left:231.1px;top:15.20px;font-size:10.9px;color:#737373;font-weight:400;-webkit-text-stroke:0.05px currentColor;letter-spacing:0.001px;">Search...</div>
<div class="t" style="left:199px;top:53.00px;font-size:10.0px;color:#0a78b0;font-weight:400;letter-spacing:-0.062px;">Home</div>
<div class="t" style="left:241.5px;top:53.00px;font-size:10.0px;color:#0a78b0;font-weight:400;letter-spacing:0.039px;">Subscriptions</div>
<div class="t" style="left:198.2px;top:72.80px;font-size:27.7px;color:#0a78b0;font-weight:400;letter-spacing:0.133px;">iranservercommunity.fun</div>
<div class="t" style="left:548.6px;top:85.60px;font-size:9.1px;color:#222;font-weight:700;letter-spacing:0.021px;-webkit-text-stroke:0;">Active</div>
<div class="t" style="left:222px;top:312.00px;font-size:12.4px;color:#2e2e2e;font-weight:700;letter-spacing:0.001px;-webkit-text-stroke:0;">Statistics</div>
<div class="t" style="left:222.3px;top:333.90px;font-size:11.1px;color:#222;font-weight:400;letter-spacing:-0.030px;">Disk space</div>
<div class="t" style="left:324.3px;top:333.90px;font-size:11.1px;color:#222;font-weight:400;letter-spacing:-0.011px;">5.9 MB</div>
<div class="t" style="left:222.3px;top:363.00px;font-size:11.1px;color:#222;font-weight:400;letter-spacing:0.443px;">Traffic this month</div>
<div class="t" style="left:324.3px;top:363.00px;font-size:11.1px;color:#222;font-weight:400;letter-spacing:0.112px;">30.3 MB</div>
<div class="t" style="left:222.3px;top:391.10px;font-size:11.6px;color:#0a78b0;font-weight:400;letter-spacing:0.093px;">More statistics</div>
<div class="t" style="left:454.6px;top:131.40px;font-size:11.2px;color:#2e2e2e;font-weight:700;letter-spacing:0.008px;-webkit-text-stroke:0;">Dashboard</div>
<div class="t" style="left:533.3px;top:130.40px;font-size:11.6px;color:#4b4b4b;font-weight:400;letter-spacing:0.019px;">Hosting &amp; DNS</div>
<div class="t" style="left:631.4px;top:130.40px;font-size:11.6px;color:#4b4b4b;font-weight:400;letter-spacing:0.278px;">Mail</div>
<div class="t" style="left:673.6px;top:130.40px;font-size:11.6px;color:#4b4b4b;font-weight:400;letter-spacing:0.140px;">Get Started</div>
<div class="t" style="left:455.3px;top:161.90px;font-size:12.4px;color:#2e2e2e;font-weight:700;letter-spacing:0.027px;-webkit-text-stroke:0;">Files &amp; Databases</div>
<div class="t" style="left:455.1px;top:344.00px;font-size:12.4px;color:#2e2e2e;font-weight:700;letter-spacing:0.025px;-webkit-text-stroke:0;">Dev Tools</div>
<div class="t" style="left:455.1px;top:573.00px;font-size:12.4px;color:#2e2e2e;font-weight:700;letter-spacing:0.071px;-webkit-text-stroke:0;">Security</div>
<div class="t" style="left:495.0px;top:195.70px;font-size:11.4px;color:#222;font-weight:400;letter-spacing:0.193px;">Connection Info</div>
<div class="t" style="left:495.0px;top:214.20px;font-size:9.7px;color:#6f6f6f;font-weight:400;letter-spacing:0.006px;">for FTP, Database</div>
<div class="t" style="left:707.3px;top:204.00px;font-size:11.4px;color:#222;font-weight:400;letter-spacing:-0.441px;">Files</div>
<div class="t" style="left:919.5px;top:204.00px;font-size:11.4px;color:#222;font-weight:400;letter-spacing:-0.084px;">Databases</div>
<div class="t" style="left:495.0px;top:251.00px;font-size:11.4px;color:#222;font-weight:400;letter-spacing:-0.193px;">ODBC Data Sources</div>
<div class="t" style="left:707.3px;top:251.00px;font-size:11.4px;color:#222;font-weight:400;letter-spacing:-0.500px;">FTP</div>
<div class="t" style="left:919.5px;top:251.00px;font-size:11.4px;color:#222;font-weight:400;letter-spacing:-0.021px;">Backup &amp; Restore</div>
<div class="t" style="left:495.0px;top:297.00px;font-size:11.4px;color:#222;font-weight:400;letter-spacing:0.184px;">Virtual Directories</div>
<div class="t" style="left:707.3px;top:297.00px;font-size:11.4px;color:#222;font-weight:400;letter-spacing:0.021px;">Website Copying</div>
<div class="t" style="left:495.0px;top:377.80px;font-size:11.4px;color:#222;font-weight:400;letter-spacing:-0.500px;">PHP</div>
<div class="t" style="left:495.0px;top:396.30px;font-size:9.7px;color:#6f6f6f;font-weight:400;letter-spacing:0.059px;">Version 8.3.28</div>
<div class="t" style="left:707.3px;top:386.00px;font-size:11.4px;color:#222;font-weight:400;letter-spacing:-0.226px;">ASP.NET Settings</div>
<div class="t" style="left:919.5px;top:386.00px;font-size:11.4px;color:#222;font-weight:400;letter-spacing:-0.468px;">Logs</div>
<div class="t" style="left:495.0px;top:424.80px;font-size:11.4px;color:#222;font-weight:400;letter-spacing:0.424px;">Monitoring</div>
<div class="t" style="left:498.6px;top:441.80px;font-size:9.7px;color:#c4420c;font-weight:700;letter-spacing:-0.015px;-webkit-text-stroke:0;">Not connected</div>
<div class="t" style="left:707.3px;top:433.00px;font-size:11.4px;color:#222;font-weight:400;letter-spacing:-0.009px;">Scheduled Tasks</div>
<div class="t" style="left:919.5px;top:433.00px;font-size:11.4px;color:#222;font-weight:400;letter-spacing:-0.094px;">PHP Composer</div>
<div class="t" style="left:495.0px;top:479.00px;font-size:11.4px;color:#222;font-weight:400;letter-spacing:-0.081px;">Git</div>
<div class="t" style="left:707.3px;top:479.00px;font-size:11.4px;color:#222;font-weight:400;letter-spacing:-0.021px;">Failed Request Tracing</div>
<div class="t" style="left:919.5px;top:479.00px;font-size:11.4px;color:#222;font-weight:400;letter-spacing:-0.500px;">SEO</div>
<div class="t" style="left:495.0px;top:526.00px;font-size:11.4px;color:#222;font-weight:400;letter-spacing:0.269px;">Website Importing</div>
<div class="t" style="left:495.0px;top:606.80px;font-size:11.4px;color:#222;font-weight:400;letter-spacing:-0.249px;">SSL/TLS Certificates</div>
<div class="t" style="left:498.6px;top:623.80px;font-size:9.7px;color:#c20f32;font-weight:700;letter-spacing:-0.025px;-webkit-text-stroke:0;">Domain not secured</div>
<div class="t" style="left:707.3px;top:606.80px;font-size:11.4px;color:#222;font-weight:400;letter-spacing:0.079px;">Password-Protected</div>
<div class="t" style="left:707.3px;top:622.80px;font-size:11.4px;color:#222;font-weight:400;letter-spacing:0.176px;">Directories</div>
<div class="t" style="left:919.5px;top:615.00px;font-size:11.4px;color:#222;font-weight:400;letter-spacing:0.113px;">Web Application Firewall</div>
<div class="t" style="left:495.0px;top:661.00px;font-size:11.4px;color:#222;font-weight:400;letter-spacing:0.242px;">Hotlink Protection</div>
<div class="t" style="left:707.3px;top:661.00px;font-size:11.4px;color:#222;font-weight:400;letter-spacing:0.053px;">Advisor</div>
<div class="t" style="left:211.5px;top:712.00px;font-size:9.7px;color:#6f6f6f;font-weight:400;letter-spacing:0.156px;">Website at</div>
<div class="t" style="left:261px;top:712.00px;font-size:9.9px;color:#0a78b0;font-weight:400;letter-spacing:0.237px;">httpdocs</div>
<div class="t" style="left:316.6px;top:712.00px;font-size:9.7px;color:#6f6f6f;font-weight:400;letter-spacing:-0.005px;">IP address</div>
<div class="t" style="left:365.8px;top:712.00px;font-size:9.7px;color:#222;font-weight:400;letter-spacing:-0.019px;">185.255.89.165</div>
<div class="t" style="left:449.9px;top:712.00px;font-size:9.7px;color:#6f6f6f;font-weight:400;letter-spacing:-0.044px;">System user</div>
<div class="t" style="left:507px;top:712.00px;font-size:9.7px;color:#222;font-weight:400;letter-spacing:0.018px;">iranserv_9gyz5025bci</div>
</body></html>
